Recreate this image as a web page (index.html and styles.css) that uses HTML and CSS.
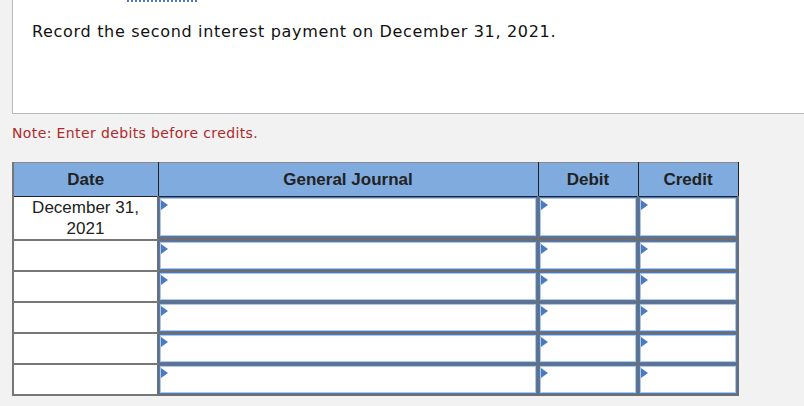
FILE: index.html
```html
<!DOCTYPE html>
<html>
<head>
<meta charset="utf-8">
<link rel="stylesheet" href="styles.css">
</head>
<body>
<div class="page">
  <div class="question">
    <span class="focus-mark"></span>
    <p class="q-text">Record the second interest payment on December 31, 2021.</p>
  </div>
  <p class="note">Note: Enter debits before credits.</p>
  <table class="journal">
    <colgroup>
      <col class="c-date"><col class="c-gj"><col class="c-amt"><col class="c-amt2">
    </colgroup>
    <thead>
      <tr><th>Date</th><th>General Journal</th><th>Debit</th><th>Credit</th></tr>
    </thead>
    <tbody>
      <tr class="first">
        <td class="date">December 31,<br>2021</td>
        <td class="in"><div class="box"><span class="flag"></span></div></td>
        <td class="in"><div class="box"><span class="flag"></span></div></td>
        <td class="in"><div class="box"><span class="flag"></span></div></td>
      </tr>
      <tr>
        <td class="date"></td>
        <td class="in"><div class="box"><span class="flag"></span></div></td>
        <td class="in"><div class="box"><span class="flag"></span></div></td>
        <td class="in"><div class="box"><span class="flag"></span></div></td>
      </tr>
      <tr>
        <td class="date"></td>
        <td class="in"><div class="box"><span class="flag"></span></div></td>
        <td class="in"><div class="box"><span class="flag"></span></div></td>
        <td class="in"><div class="box"><span class="flag"></span></div></td>
      </tr>
      <tr>
        <td class="date"></td>
        <td class="in"><div class="box"><span class="flag"></span></div></td>
        <td class="in"><div class="box"><span class="flag"></span></div></td>
        <td class="in"><div class="box"><span class="flag"></span></div></td>
      </tr>
      <tr>
        <td class="date"></td>
        <td class="in"><div class="box"><span class="flag"></span></div></td>
        <td class="in"><div class="box"><span class="flag"></span></div></td>
        <td class="in"><div class="box"><span class="flag"></span></div></td>
      </tr>
      <tr>
        <td class="date"></td>
        <td class="in"><div class="box"><span class="flag"></span></div></td>
        <td class="in"><div class="box"><span class="flag"></span></div></td>
        <td class="in"><div class="box"><span class="flag"></span></div></td>
      </tr>
    </tbody>
  </table>
</div>
</body>
</html>
```
FILE: styles.css
```css
html, body {
  margin: 0;
  padding: 0;
  background: #f2f2f2;
}
.page {
  padding-left: 12px;
}
.question {
  position: relative;
  margin-top: -1px;
  background: #ffffff;
  border: 1px solid #b9b9b9;
  border-right: none;
  box-sizing: border-box;
  height: 115px;
}
.focus-mark {
  position: absolute;
  top: 0;
  left: 114px;
  width: 70px;
  border-top: 2px dotted #4a78c2;
}
.q-text {
  margin: 0;
  padding: 22px 0 0 19px;
  font-family: "DejaVu Sans", Verdana, sans-serif;
  font-size: 16px;
  letter-spacing: 0.68px;
  line-height: 20px;
  color: #111;
}
.note {
  margin: 11px 0 20px 0;
  font-family: "DejaVu Sans", Verdana, sans-serif;
  font-size: 14px;
  letter-spacing: 0.38px;
  line-height: 17px;
  color: #b0282a;
}
.journal {
  border-collapse: collapse;
  table-layout: fixed;
  width: 727px;
  border-top: 1px solid #8a8a8a;
  border-left: 2px solid #777;
  font-family: "Liberation Sans", Arial, sans-serif;
}
.c-date { width: 145px; }
.c-gj { width: 380px; }
.c-amt { width: 100px; }
.c-amt2 { width: 100px; }
.journal th {
  height: 33px;
  padding: 0;
  background: #80abdf;
  border: 1px solid #222;
  border-top: none;
  font-size: 17px;
  font-weight: bold;
  color: #222;
  text-align: center;
}
.journal th:first-child {
  border-left: none;
}
.journal td {
  padding: 0;
  border: 1px solid #777;
  border-bottom-width: 2px;
}
.journal td:first-child {
  border-left: none;
}
.journal td.date {
  background: #fff;
  text-align: center;
  font-size: 17px;
  line-height: 21px;
  color: #222;
  vertical-align: top;
}
.journal td.in {
  border: 2px solid #6e6e6e;
  border-top-width: 1px;
  background: #6e6e6e;
  vertical-align: top;
}
.journal thead + tbody tr.first td.in {
  border-top: none;
}
.box {
  position: relative;
  box-sizing: border-box;
  height: 29px;
  background: #fff;
  border: 1px solid #4a7bbf;
  box-shadow: inset 0 0 0 1px #aec7ea;
}
tr.first .box {
  height: 40px;
}
.flag {
  position: absolute;
  top: 2px;
  left: 1px;
  width: 0;
  height: 0;
  border-top: 5px solid transparent;
  border-bottom: 5px solid transparent;
  border-left: 7px solid #4a7bbf;
}
```
